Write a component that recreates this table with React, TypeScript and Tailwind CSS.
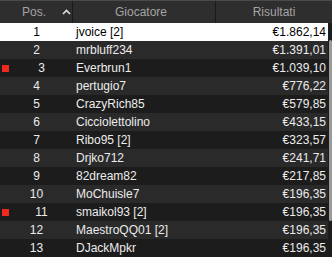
const rows = [
  { pos: 1, name: "jvoice [2]", amount: "€1.862,14" },
  { pos: 2, name: "mrbluff234", amount: "€1.391,01" },
  { pos: 3, name: "Everbrun1", amount: "€1.039,10", flag: true },
  { pos: 4, name: "pertugio7", amount: "€776,22" },
  { pos: 5, name: "CrazyRich85", amount: "€579,85" },
  { pos: 6, name: "Cicciolettolino", amount: "€433,15" },
  { pos: 7, name: "Ribo95 [2]", amount: "€323,57" },
  { pos: 8, name: "Drjko712", amount: "€241,71" },
  { pos: 9, name: "82dream82", amount: "€217,85" },
  { pos: 10, name: "MoChuisle7", amount: "€196,35" },
  { pos: 11, name: "smaikol93 [2]", amount: "€196,35", flag: true },
  { pos: 12, name: "MaestroQQ01 [2]", amount: "€196,35" },
  { pos: 13, name: "DJackMpkr", amount: "€196,35" },
];

export default function App() {
  return (
    <div
      className="relative w-[332px] h-[257px] overflow-hidden bg-[#1d1d1d] text-[12px]"
      style={{ fontFamily: '"Liberation Sans", Arial, sans-serif' }}
    >
      {/* header */}
      <div className="flex h-[23px] bg-[#2e2e2e] border-t border-[#4a4a4a] text-[#a4a4a4]">
        <div className="w-[73px] flex items-center pl-[22px] gap-[16px] border-r border-[#1a1a1a]">
          <span>Pos.</span>
          <svg width="9" height="6" viewBox="0 0 9 6">
            <path d="M1 5 L4.5 1.5 L8 5" fill="none" stroke="#e0e0e0" strokeWidth="1.6" />
          </svg>
        </div>
        <div className="w-[143px] flex items-center justify-center pr-[6px] border-r border-[#1a1a1a]">Giocatore</div>
        <div className="flex-1 flex items-center justify-center">Risultati</div>
      </div>

      {/* rows */}
      <div className="w-[328px]">
        {rows.map((r, i) => (
          <div
            key={r.pos}
            className={
              "relative flex h-[18px] items-center " +
              (i === 0
                ? "bg-white text-black"
                : i % 2 === 1
                ? "bg-[#2a2a2a] text-[#ececec]"
                : "bg-[#1c1c1c] text-[#ececec]")
            }
          >
            {r.flag && <div className="absolute left-[2px] top-[6px] w-[7px] h-[7px] bg-[#f0281e]" />}
            <div className={"w-[73px] text-center " + (r.flag ? "pl-[10px]" : "")}>{r.pos}</div>
            <div className="flex-1 pl-[3px] whitespace-nowrap">{r.name}</div>
            <div className="pr-[2px] text-right">{r.amount}</div>
          </div>
        ))}
      </div>

      {/* scrollbar */}
      <div className="absolute right-0 top-[23px] w-[4px] h-[234px] bg-[#1d1d1d]">
        <div className="ml-[1px] mt-[17px] w-[3px] h-[181px] rounded-full bg-[#9a9a9a]" />
      </div>
    </div>
  );
}
